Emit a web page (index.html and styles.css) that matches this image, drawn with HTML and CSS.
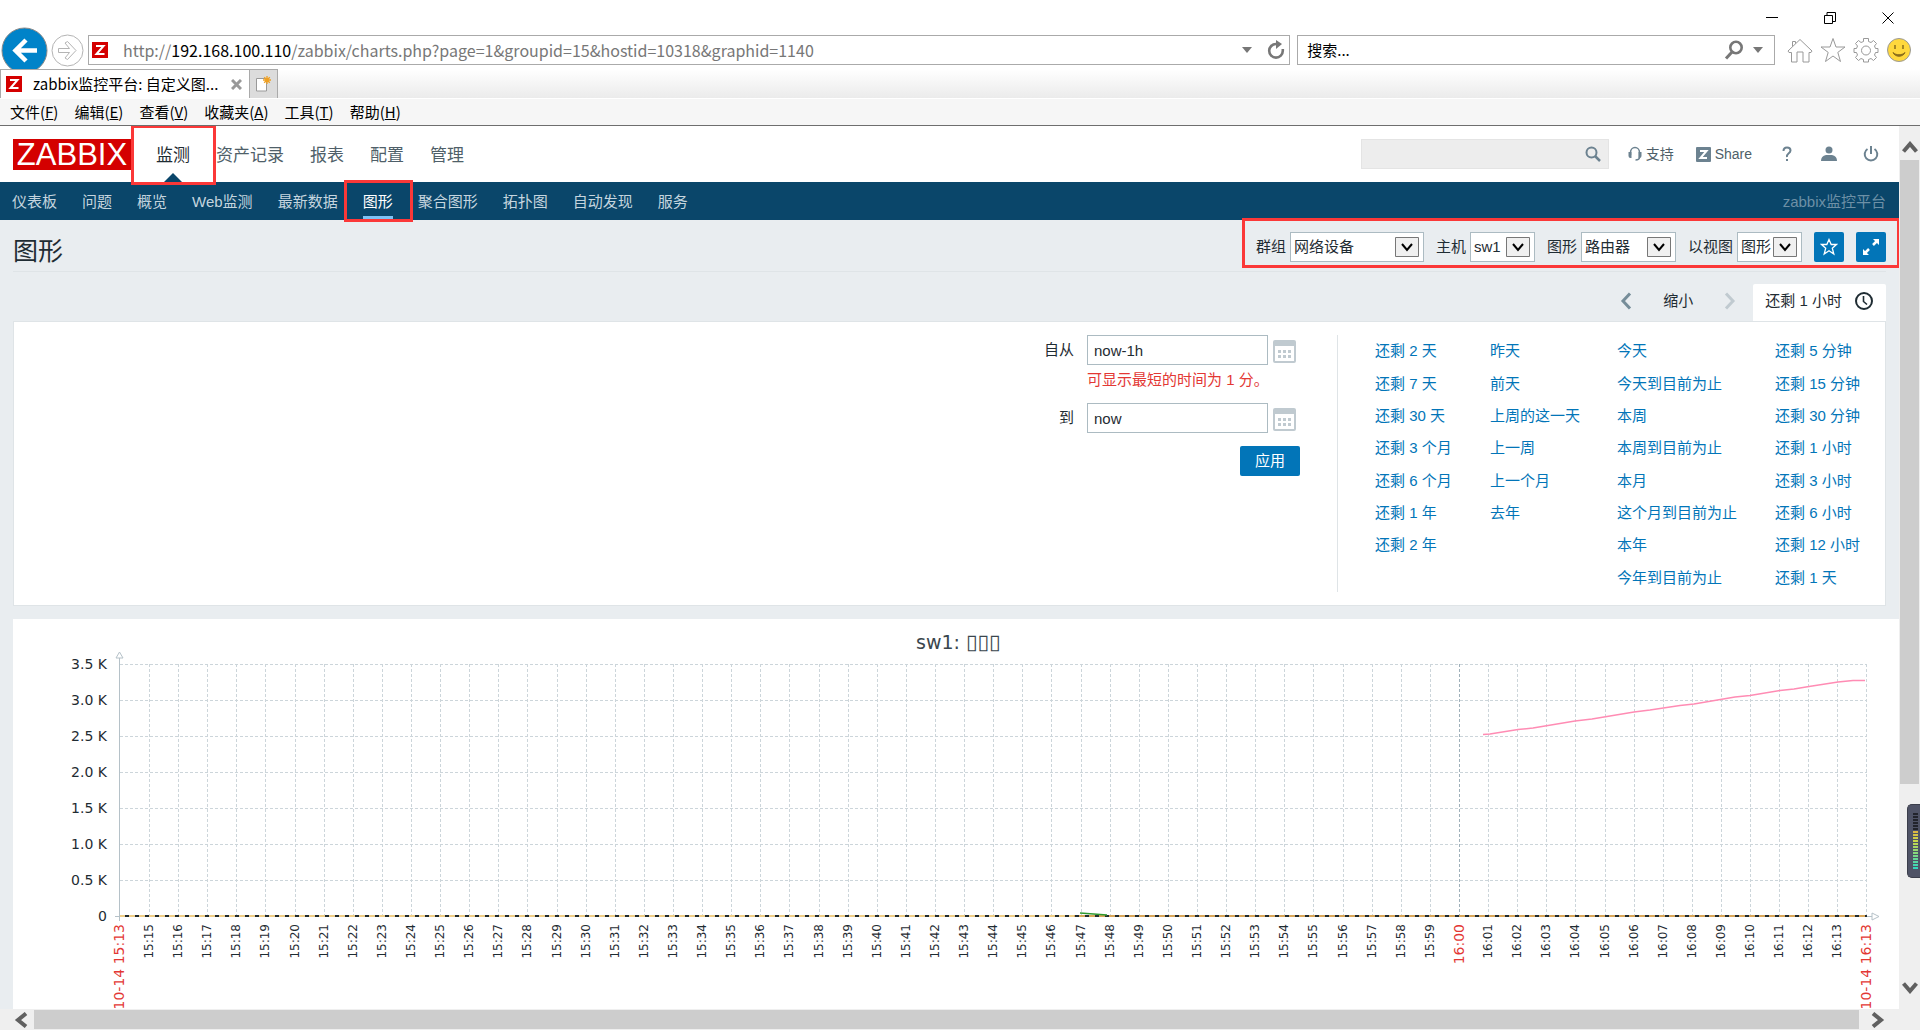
FILE: index.html
```html
<!DOCTYPE html>
<html lang="zh-CN">
<head>
<meta charset="utf-8">
<title>zabbix监控平台: 自定义图形</title>
<link rel="stylesheet" href="styles.css">
</head>
<body>
<div class="window">
  <div class="titlebar">
    <button class="win-btn" aria-label="最小化"><svg width="12" height="12" viewBox="0 0 12 12"><path d="M0 5.500h12" stroke="#000" fill="none"/></svg></button>
    <button class="win-btn" aria-label="还原"><svg width="12" height="12" viewBox="0 0 12 12"><path d="M.5 3.500h8v8h-8zM3 3V.5h8.500v9H9" stroke="#000" fill="none"/></svg></button>
    <button class="win-btn" aria-label="关闭"><svg width="12" height="12" viewBox="0 0 12 12"><path d="M.5.5l11 11M11.500.5l-11 11" stroke="#000" fill="none"/></svg></button>
  </div>
  <div class="toolbar">
    <button class="bare" aria-label="后退"><svg width="47" height="42" viewBox="0 0 47 42"><circle cx="23.500" cy="23.500" r="22.500" fill="#0083c9" stroke="#8a8a8a"/><path d="M36 23.500H14M25 13L14.500 23.500 25 34" fill="none" stroke="#fff" stroke-width="4.500"/></svg></button>
    <button class="bare" aria-label="前进"><svg width="33" height="42" viewBox="0 0 33 42"><circle cx="16.500" cy="23.500" r="15.500" fill="#fff" stroke="#b4b4b4"/><path d="M7.500 21.500h11l-4.500-5.500 2.500-1.500 8.500 9-8.500 9-2.500-1.500 4.500-5.500h-11z" fill="none" stroke="#b4b4b4"/></svg></button>
    <div class="address">
      <svg class="fav" width="16" height="16" viewBox="0 0 16 16"><rect width="16" height="16" fill="#d40000"/><path d="M4 4h7.500L4.500 12H12.500" fill="none" stroke="#fff" stroke-width="2"/></svg>
      <span class="url">http://<b>192.168.100.110</b>/zabbix/charts.php?page=1&amp;groupid=15&amp;hostid=10318&amp;graphid=1140</span>
      <svg width="10" height="6" viewBox="0 0 10 6"><path d="M0 0h10L5 6z" fill="#777"/></svg>
      <svg width="18" height="20" viewBox="0 0 18 20"><path d="M9 4a6.800 6.800 0 1 0 6.800 6.800V9" fill="none" stroke="#777" stroke-width="2.600"/><path d="M9 0l6 4-6 5z" fill="#777"/></svg>
    </div>
    <div class="websearch">
      <input type="text" value="搜索..." aria-label="搜索">
      <svg width="20" height="20" viewBox="0 0 20 20"><circle cx="12" cy="7.500" r="5.700" fill="none" stroke="#777" stroke-width="2.600"/><path d="M8.500 11.500L2 18.500" stroke="#777" stroke-width="3"/></svg>
      <svg width="10" height="6" viewBox="0 0 10 6"><path d="M0 0h10L5 6z" fill="#777"/></svg>
    </div>
    <div class="ie-icons">
      <svg width="26" height="26" viewBox="0 0 26 26"><path d="M1 14L13 2.500l12 11.500-1 1.500h-2v9.500h-6v-10h-6v10H4.500v-9.500H2zM5.500 9.500v-5h3v2" fill="#fff" stroke="#999"/></svg>
      <svg width="26" height="26" viewBox="0 0 26 26"><path d="M13 1.500l3 8.500h9l-7.200 5.400L20.500 24.500 13 19l-7.500 5.500 2.700-9.100L1 10h9z" fill="#fff" stroke="#999"/></svg>
      <svg width="26" height="26" viewBox="0 0 26 26"><path d="M10.500 1.500h5v3l2.500 1 2.500-2 3 3-2 2.500 1 2.500h2.500v4h-2.500l-1 2.500 2 2.500-3 3-2.500-2-2.500 1v2.500h-5v-2.500l-2.500-1-2.500 2-3-3 2-2.500-1-2.500H1v-4h2.500l1-2.500-2-2.500 3-3 2.500 2 2.500-1z" fill="#fff" stroke="#999"/><circle cx="13" cy="13.500" r="4.500" fill="#fff" stroke="#999"/></svg>
      <svg width="26" height="26" viewBox="0 0 26 26"><circle cx="13" cy="13" r="11.500" fill="#ffd83d" stroke="#999"/><path d="M9 8v4M17 8v4" stroke="#8a6d1b" stroke-width="1.500"/><path d="M7 15.500c2 5 10 5 12 0-3 3-9 3-12 0z" fill="#8a6d1b" stroke="#8a6d1b"/></svg>
    </div>
  </div>
  <div class="tabs">
    <div class="tab">
      <svg width="16" height="16" viewBox="0 0 16 16"><rect width="16" height="16" fill="#d40000"/><path d="M4 4h7.500L4.500 12H12.500" fill="none" stroke="#fff" stroke-width="2"/></svg>
      <span>zabbix监控平台: 自定义图...</span>
      <button class="bare" aria-label="关闭标签页"><svg width="11" height="11" viewBox="0 0 11 11"><path d="M1 1l9 9M10 1l-9 9" stroke="#999" stroke-width="3"/></svg></button>
    </div>
    <button class="newtab" aria-label="新建标签页"><svg width="16" height="16" viewBox="0 0 16 16"><path d="M1.500 2.500h10v12.500h-10z" fill="#fff" stroke="#999"/><path d="M12 0v8M8 4h8M9.200 1.200l5.600 5.600M14.800 1.200L9.200 6.800" stroke="#f0a020" stroke-width="1.300"/></svg></button>
  </div>
  <div class="menubar">
    <a href="#">文件(<u>F</u>)</a><a href="#">编辑(<u>E</u>)</a><a href="#">查看(<u>V</u>)</a><a href="#">收藏夹(<u>A</u>)</a><a href="#">工具(<u>T</u>)</a><a href="#">帮助(<u>H</u>)</a>
  </div>

  <div class="viewport">
    <div class="page">
      <header class="header">
        <a href="#" class="logo">ZABBIX</a>
        <nav class="topmenu">
          <a href="#" class="active">监测</a><a href="#">资产记录</a><a href="#">报表</a><a href="#">配置</a><a href="#">管理</a>
        </nav>
        <div class="sitesearch">
          <input type="text" aria-label="搜索">
          <svg width="16" height="16" viewBox="0 0 16 16"><circle cx="6.500" cy="6.500" r="5" fill="none" stroke="#6c8290" stroke-width="2"/><path d="M10 10l5 5" stroke="#6c8290" stroke-width="2.500"/></svg>
        </div>
        <div class="links">
          <a href="#"><svg width="14" height="16" viewBox="0 0 14 16"><path d="M2.500 9V6.500a4.500 5 0 0 1 9 0V11q0 3-4 3" fill="none" stroke="#6c8290" stroke-width="1.500"/><path d="M.5 6h3v6h-1q-2 0-2-2zM10.500 6h3v4q0 2-2 2h-1z" fill="#6c8290"/></svg>支持</a>
          <a href="#"><svg width="15" height="15" viewBox="0 0 15 15"><rect width="15" height="15" rx="1" fill="#6c8290"/><path d="M4 4h6.500l-6 7H11" fill="none" stroke="#fff" stroke-width="2"/></svg>Share</a>
        </div>
        <div class="usericons">
          <a href="#" aria-label="帮助"><svg width="16" height="16" viewBox="0 0 16 16"><path d="M4.500 5q0-3.500 3.500-3.500t3.500 3q0 1.500-2 3T8 11" fill="none" stroke="#6c8290" stroke-width="2"/><path d="M7 13h2v2H7z" fill="#6c8290"/></svg></a>
          <a href="#" aria-label="用户"><svg width="16" height="16" viewBox="0 0 16 16"><circle cx="8" cy="4" r="3.500" fill="#6c8290"/><path d="M0 15q0-5 5-6h6q5 1 5 6z" fill="#6c8290"/></svg></a>
          <a href="#" aria-label="退出"><svg width="16" height="16" viewBox="0 0 16 16"><path d="M4.500 3a6.300 6.300 0 1 0 7 0M8 0v8" fill="none" stroke="#6c8290" stroke-width="2"/></svg></a>
        </div>
      </header>
      <nav class="subnav">
        <a href="#">仪表板</a><a href="#">问题</a><a href="#">概览</a><a href="#">Web监测</a><a href="#">最新数据</a><a href="#" class="active">图形</a><a href="#">聚合图形</a><a href="#">拓扑图</a><a href="#">自动发现</a><a href="#">服务</a>
        <span class="server">zabbix监控平台</span>
      </nav>

      <div class="titlerow">
        <h1>图形</h1>
        <form class="filters">
          <label for="group">群组</label>
          <span class="pick wide"><select id="group"><option>网络设备</option></select><svg width="24" height="20" viewBox="0 0 24 20"><path d="M.5.5h23v19H.5z" fill="#f0f0f0" stroke="#777"/><path d="M7 7l5 6 5-6" fill="none" stroke="#000" stroke-width="2"/></svg></span>
          <label for="host">主机</label>
          <span class="pick"><select id="host"><option>sw1</option></select><svg width="24" height="20" viewBox="0 0 24 20"><path d="M.5.5h23v19H.5z" fill="#f0f0f0" stroke="#777"/><path d="M7 7l5 6 5-6" fill="none" stroke="#000" stroke-width="2"/></svg></span>
          <label for="graph">图形</label>
          <span class="pick mid"><select id="graph"><option>路由器</option></select><svg width="24" height="20" viewBox="0 0 24 20"><path d="M.5.5h23v19H.5z" fill="#f0f0f0" stroke="#777"/><path d="M7 7l5 6 5-6" fill="none" stroke="#000" stroke-width="2"/></svg></span>
          <label for="view">以视图</label>
          <span class="pick"><select id="view"><option>图形</option></select><svg width="24" height="20" viewBox="0 0 24 20"><path d="M.5.5h23v19H.5z" fill="#f0f0f0" stroke="#777"/><path d="M7 7l5 6 5-6" fill="none" stroke="#000" stroke-width="2"/></svg></span>
          <button type="button" class="square" aria-label="收藏"><svg width="18" height="18" viewBox="0 0 18 18"><path d="M9 1.500l2.200 5h5.300l-4.200 3.700 1.500 5.800L9 12.800 4.200 16l1.500-5.800L1.500 6.500h5.300z" fill="none" stroke="#fff" stroke-width="1.300"/></svg></button>
          <button type="button" class="square" aria-label="全屏"><svg width="18" height="18" viewBox="0 0 18 18"><path d="M11 1h6v6zM1 11v6h6z" fill="#fff"/><path d="M15 3l-4 4M3 15l4-4" stroke="#fff" stroke-width="2.500"/></svg></button>
        </form>
      </div>

      <div class="timenav">
        <button class="bare" aria-label="向前"><svg width="12" height="18" viewBox="0 0 12 18"><path d="M10 1.500L3 9l7 7.500" fill="none" stroke="#768d99" stroke-width="3"/></svg></button>
        <button class="bare zoomout">缩小</button>
        <button class="bare" aria-label="向后"><svg width="12" height="18" viewBox="0 0 12 18"><path d="M2 1.500L9 9l-7 7.500" fill="none" stroke="#c0cad0" stroke-width="3"/></svg></button>
        <a href="#" class="timetab">还剩 1 小时<svg width="20" height="20" viewBox="0 0 20 20"><circle cx="10" cy="10" r="8" fill="none" stroke="#1f2c33" stroke-width="2"/><path d="M9.500 5v5.500l3.500 3" fill="none" stroke="#1f2c33" stroke-width="1.600"/></svg></a>
      </div>

      <section class="panel">
        <form class="range">
          <label for="from">自从</label>
          <input id="from" type="text" value="now-1h">
          <button type="button" class="bare" aria-label="选择开始日期"><svg width="24" height="24" viewBox="0 0 24 24"><rect x="1" y="1" width="21" height="21" rx="1" fill="#fff" stroke="#c0cad0" stroke-width="2"/><path d="M1 1h21v5H1z" fill="#c0cad0"/><path d="M5 11.500h14M5 16.500h14" stroke="#c0cad0" stroke-width="3" stroke-dasharray="3 2"/></svg></button>
          <p class="error">可显示最短的时间为 1 分。</p>
          <label for="to">到</label>
          <input id="to" type="text" value="now">
          <button type="button" class="bare" aria-label="选择结束日期"><svg width="24" height="24" viewBox="0 0 24 24"><rect x="1" y="1" width="21" height="21" rx="1" fill="#fff" stroke="#c0cad0" stroke-width="2"/><path d="M1 1h21v5H1z" fill="#c0cad0"/><path d="M5 11.500h14M5 16.500h14" stroke="#c0cad0" stroke-width="3" stroke-dasharray="3 2"/></svg></button>
          <button type="button" class="apply">应用</button>
        </form>
        <div class="presets">
          <ul><li><a href="#">还剩 2 天</a></li><li><a href="#">还剩 7 天</a></li><li><a href="#">还剩 30 天</a></li><li><a href="#">还剩 3 个月</a></li><li><a href="#">还剩 6 个月</a></li><li><a href="#">还剩 1 年</a></li><li><a href="#">还剩 2 年</a></li></ul>
          <ul><li><a href="#">昨天</a></li><li><a href="#">前天</a></li><li><a href="#">上周的这一天</a></li><li><a href="#">上一周</a></li><li><a href="#">上一个月</a></li><li><a href="#">去年</a></li></ul>
          <ul><li><a href="#">今天</a></li><li><a href="#">今天到目前为止</a></li><li><a href="#">本周</a></li><li><a href="#">本周到目前为止</a></li><li><a href="#">本月</a></li><li><a href="#">这个月到目前为止</a></li><li><a href="#">本年</a></li><li><a href="#">今年到目前为止</a></li></ul>
          <ul><li><a href="#">还剩 5 分钟</a></li><li><a href="#">还剩 15 分钟</a></li><li><a href="#">还剩 30 分钟</a></li><li><a href="#">还剩 1 小时</a></li><li><a href="#">还剩 3 小时</a></li><li><a href="#">还剩 6 小时</a></li><li><a href="#">还剩 12 小时</a></li><li><a href="#">还剩 1 天</a></li></ul>
        </div>
      </section>

      <section class="chart">
        <svg id="chart" viewBox="0 0 1886 400" role="img" aria-label="sw1"></svg>
      </section>
    </div>

    <div class="vscroll">
      <svg class="up" width="16" height="12" viewBox="0 0 16 12"><path d="M1.500 10.500L8 3l6.500 7.500" fill="none" stroke="#606060" stroke-width="4"/></svg>
      <div class="vthumb"></div>
      <div class="vrest"></div>
      <svg class="down" width="16" height="12" viewBox="0 0 16 12"><path d="M1.500 1.500L8 9l6.500-7.500" fill="none" stroke="#606060" stroke-width="4"/></svg>
    </div>
    <div class="hscroll">
      <svg width="14" height="16" viewBox="0 0 14 16"><path d="M12 1.500L4 8l8 6.500" fill="none" stroke="#606060" stroke-width="4"/></svg>
      <div class="hthumb"></div>
      <svg width="14" height="16" viewBox="0 0 14 16"><path d="M2 1.500L10 8l-8 6.500" fill="none" stroke="#606060" stroke-width="4"/></svg>
    </div>
  </div>
  <div class="meter"><span></span></div>
</div>
<script src="chart.js"></script>
</body>
</html>
```
FILE: styles.css
```css
* { box-sizing: border-box; }
body { margin: 0; font: 15px/20px "Liberation Sans", "Noto Sans CJK SC", sans-serif; color: #1f2c33; }
a { color: inherit; text-decoration: none; }
button, input, select { font: inherit; color: inherit; margin: 0; }
svg { display: block; flex: none; }
.bare { border: 0; padding: 0; background: none; flex: none; }

.window { height: 100vh; display: flex; flex-direction: column; background: #fff; overflow: hidden; }
.titlebar { height: 27px; display: flex; justify-content: flex-end; align-items: flex-end; gap: 46px; padding: 0 26px 3px; flex: none; }
.win-btn { border: 0; padding: 0; background: none; }

.toolbar { height: 42px; display: flex; align-items: flex-start; padding: 0 8px 0 1px; flex: none; font-family: "Noto Sans CJK SC", sans-serif; }
.toolbar > .bare:nth-child(2) { margin: 0 4px 0 3px; }
.address, .websearch { height: 30px; margin-top: 8px; border: 1px solid #aaa; display: flex; align-items: center; min-width: 0; }
.address { flex: 1; padding: 0 4px 0 3px; gap: 15px; }
.url { flex: 1; font-size: 16px; line-height: 28px; color: #777; white-space: nowrap; }
.url b { font-weight: 400; color: #000; }
.websearch { width: 25%; margin-left: 7px; padding: 0 11px 0 9px; gap: 9px; }
.websearch input { flex: 1; min-width: 0; border: 0; padding: 0; color: #000; background: none; }
.ie-icons { display: flex; gap: 7px; margin: 10px 0 0 12px; }

.tabs { height: 30px; display: flex; flex: none; background: linear-gradient(#fff, #ebebeb); border-bottom: 1px solid #fff; font-family: "Noto Sans CJK SC", sans-serif; }
.tab { width: 250px; display: flex; align-items: center; gap: 11px; padding: 0 7px 0 5px; background: #fff; border: 1px solid #aaa; border-width: 1px 1px 0; color: #000; }
.tab span { flex: 1; white-space: nowrap; }
.newtab { width: 28px; border: 1px solid #aaa; border-width: 1px 1px 0 0; background: #dcdcdc; padding: 0 5px; }
.menubar { height: 27px; display: flex; align-items: center; gap: 16px; padding-left: 10px; flex: none; background: #f6f6f6; border-bottom: 1px solid #6e6e6e; color: #000; font-family: "Noto Sans CJK SC", sans-serif; }

.viewport { flex: 1; min-height: 0; display: grid; grid-template: minmax(0, 1fr) 21px / minmax(0, 1fr) 21px; background: #efefef; }
.page { background: #e9edf0; overflow: hidden; }

.header { height: 56px; display: flex; align-items: center; background: #fff; padding: 0 20px 0 13px; white-space: nowrap; }
.logo { width: 118px; height: 31px; background: #d40000; color: #fff; font-size: 31px; line-height: 32px; text-align: center; }
.topmenu { display: flex; gap: 26px; margin-left: 25px; flex: 1; font-size: 17px; color: #4f5f69; }
.topmenu .active { position: relative; color: #1f2c33; }
.topmenu a { line-height: 52px; padding-top: 4px; }
.topmenu .active::before { content: ""; position: absolute; left: 8px; bottom: 0; border: 9px solid transparent; border-top: 0; border-bottom-color: #0a466a; }
.topmenu .active::after { content: ""; position: absolute; z-index: 2; left: -25px; right: -26px; top: -1px; bottom: -3px; border: 3px solid #fb3838; }
.sitesearch { width: 248px; height: 30px; display: flex; align-items: center; padding-right: 7px; background: #ededed; border: 1px solid #e4e4e4; }
.sitesearch input { flex: 1; min-width: 0; border: 0; background: none; }
.links { display: flex; gap: 22px; margin: 0 27px 0 19px; font-size: 14px; color: #4f5f69; }
.links a { display: flex; align-items: center; gap: 4px; }
.usericons { display: flex; gap: 26px; }

.subnav { height: 38px; display: flex; gap: 25px; padding: 0 13px 0 12px; background: #0a466a; color: #c5d5df; line-height: 40px; white-space: nowrap; }
.subnav .active { position: relative; height: 38px; color: #fff; }
.subnav .active::before { content: ""; position: absolute; left: 0; right: 0; bottom: 1px; height: 3px; background: #7dc2f5; }
.subnav .active::after { content: ""; position: absolute; left: -19px; right: -20px; top: -2px; bottom: -2px; border: 3px solid #fb3838; }
.server { margin-left: auto; color: #6d90a6; }

.titlerow { height: 52px; margin: 0 13px; display: flex; align-items: flex-start; justify-content: space-between; border-bottom: 1px solid #dfe4e7; }
h1 { margin: 11px 0 0; font-size: 25px; line-height: 40px; font-weight: 400; }
.filters { position: relative; display: flex; align-items: center; margin-top: 12px; white-space: nowrap; }
.filters::after { content: ""; position: absolute; left: -14px; right: -14px; top: -14px; bottom: -6px; border: 3px solid #fb3838; pointer-events: none; }
.filters label { margin-right: 4px; }
.pick { position: relative; width: 65px; margin-right: 12px; }
.pick.mid { width: 95px; }
.pick.wide { width: 134px; }
.pick select { appearance: none; width: 100%; height: 30px; padding: 0 3px; border: 1px solid #acbbc2; border-radius: 0; background: #fff; display: block; }
.pick svg { position: absolute; right: 5px; top: 5px; pointer-events: none; }
.square { width: 30px; height: 30px; padding: 0; border: 0; border-radius: 2px; background: #0275b8; display: grid; place-items: center; }
.square + .square { margin-left: 12px; }

.timenav { height: 49px; margin: 0 13px; padding: 12px 0 0; display: flex; justify-content: flex-end; align-items: center; }
.timenav > .bare { padding-bottom: 4px; }
.zoomout { margin: 0 31px; }
.timetab { display: flex; align-items: center; gap: 12px; height: 37px; margin-left: 17px; padding: 0 12px 4px; background: #fff; border-radius: 2px 2px 0 0; }

.panel { margin: 0 13px; padding: 13px 0 11px; display: flex; justify-content: flex-end; background: #fff; border: 1px solid #dfe4e7; }
.range { display: grid; grid-template-columns: auto 181px 27px; grid-template-rows: 30px 38px 30px 30px; align-content: start; align-items: center; column-gap: 5px; padding-right: 37px; }
.range label { text-align: right; padding-right: 8px; }
.range input { height: 30px; padding: 0 6px; border: 1px solid #acbbc2; background: #fff; }
.range .bare { padding-top: 3px; }
.error { grid-column: 2 / 4; margin: 0; padding-bottom: 8px; color: #e33734; white-space: nowrap; }
.apply { grid-column: 2 / 4; justify-self: end; width: 60px; height: 30px; margin-top: 26px; padding: 0; border: 0; border-radius: 2px; background: #0275b8; color: #fff; }
.presets { display: grid; grid-template-columns: 115px 127px 158px 110px; height: 259px; padding-left: 38px; background: linear-gradient(#dfe4e7, #dfe4e7) no-repeat left top / 1px 257px; color: #0275b8; white-space: nowrap; }
.presets ul { margin: 0; padding: 0; list-style: none; display: grid; grid-template-rows: repeat(8, 1fr); align-items: center; }

.chart { margin: 13px 0 0 13px; background: #fff; }
.chart svg { width: 100%; height: auto; font-family: "DejaVu Sans", sans-serif; fill: #1f2c33; }
.chart .tick { font-size: 12px; text-anchor: end; }
.chart .major { font-size: 14px; text-anchor: end; fill: #e33734; }
.chart .value { font-size: 14px; text-anchor: end; }
.chart .title { font-size: 19px; fill: #3a464d; }
.chart .boxes { font-size: 21px; }
.chart .grid { stroke: #ccd5da; stroke-dasharray: 3 2; }
.chart .hour { stroke: #9fb0ba; stroke-dasharray: 3 2; }
.chart .axis { stroke: #b5c1c8; fill: none; }

.vscroll { display: flex; flex-direction: column; align-items: center; }
.up { margin: 15px 0 7px; }
.vthumb { flex: 623; width: 19px; background: #cdcdcd; }
.vrest { flex: 198; }
.down { margin-bottom: 15px; }
.hscroll { display: flex; align-items: center; gap: 6px; padding: 0 35px 0 14px; grid-column: 1 / 3; }
.hscroll svg:last-child { margin-left: 6px; }
.hthumb { flex: 1; height: 19px; background: #cdcdcd; }
.meter { position: fixed; right: 0; top: 804px; width: 13px; height: 74px; padding: 8px 2px 8px 5px; background: #4f5366; border: 1px solid #3b3e4b; border-right: 0; border-radius: 5px 0 0 5px; }
.meter span { display: block; height: 100%; background: repeating-linear-gradient(transparent 0 2px, #4f5366 2px 3px), linear-gradient(#22242c 0 30%, #e0b040 30%, #c9d94a 50%, #30d8c0); }
```
FILE: chart.js
```js
const svg = document.getElementById('chart');
const NS = 'http://www.w3.org/2000/svg';

function add(name, attrs, text, parent = svg) {
  const el = document.createElementNS(NS, name);
  for (const key in attrs) el.setAttribute(key, attrs[key]);
  if (text) el.textContent = text;
  parent.appendChild(el);
  return el;
}

const left = 107, right = 1854, top_ = 45, base = 297;

const title = add('text', { class: 'title', x: 903, y: 30 }, 'sw1: ');
add('tspan', { class: 'boxes' }, '▯▯▯', title);

// Horizontal grid and value labels
['0', '0.5 K', '1.0 K', '1.5 K', '2.0 K', '2.5 K', '3.0 K', '3.5 K'].forEach((label, i) => {
  const y = Math.round(base - i * (base - top_) / 7) + 0.5;
  if (i) add('path', { class: 'grid', d: `M${left} ${y}H${right}` });
  add('text', { class: 'value', x: 94, y: y + 4 }, label);
});

// One vertical line and label per minute, 15:15 to 16:13
for (let m = 0; m <= 58; m++) {
  const x = Math.round(137 + m * 29.11);
  const t = 15 * 60 + 15 + m;
  const label = Math.floor(t / 60) + ':' + String(t % 60).padStart(2, '0');
  const hour = t % 60 === 0;
  add('path', { class: hour ? 'hour' : 'grid', d: `M${x - 0.5} ${top_}V${base}` });
  add('text', { class: hour ? 'major' : 'tick', transform: `translate(${x + (hour ? 4 : 3)} 305) rotate(-90)` }, label);
}
add('path', { class: 'grid', d: `M${right - 0.5} ${top_}V${base}` });
add('text', { class: 'major', transform: 'translate(111 305) rotate(-90)' }, '10-14 15:13');
add('text', { class: 'major', transform: 'translate(1858 305) rotate(-90)' }, '10-14 16:13');

// Axes
add('path', { class: 'axis', d: 'M106.5 302V39M103 39h7l-3.5-6zM102 297.5H1859M1859 294v7l7-3.5z' });

// Series
add('path', { d: 'M107 297H1854', stroke: '#f0cf88', 'stroke-width': 2 });
add('path', { d: 'M1061 297H1854', stroke: '#d9a75a', 'stroke-width': 2 });
add('path', { d: 'M112 297H1854', stroke: '#222c30', 'stroke-width': 2, 'stroke-dasharray': '4 6' });
add('path', { d: 'M1067 294L1094 296', stroke: '#2e9a2e', 'stroke-width': 1.5, fill: 'none' });
add('polyline', {
  points: '1470,115.5 1477,115 1505,110.5 1520,109 1562,102 1579,100 1621,93 1637,91 1667,86.5 1681,85 1722,78 1737,76.5 1767,71.5 1781,70 1796,67.5 1825,63 1840,61.5 1852,61.5',
  stroke: '#ff8cb4', 'stroke-width': 1.5, fill: 'none'
});
```
